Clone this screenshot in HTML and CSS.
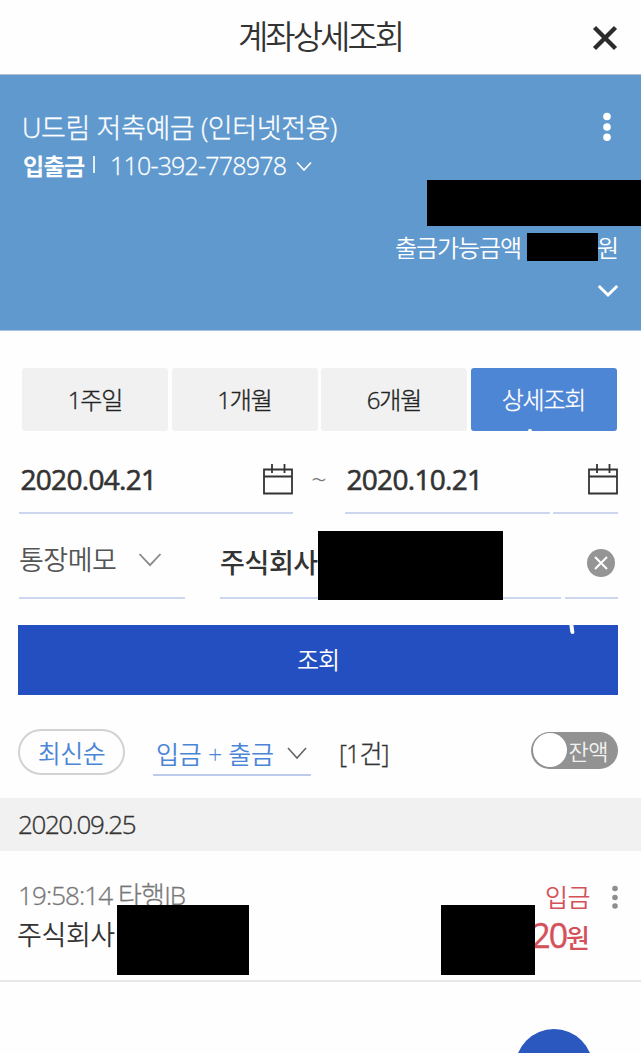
FILE: index.html
```html
<!DOCTYPE html>
<html lang="ko">
<head>
<meta charset="utf-8">
<title>계좌상세조회</title>
<link rel="stylesheet" href="styles.css">
</head>
<body>
<div class="screen">
  <header class="topbar">
    <h1 class="topbar-title">계좌상세조회</h1>
    <svg class="close" width="26" height="26" viewBox="0 0 26 26"><path d="M2.5 2.5 23.5 23.5M23.5 2.5 2.5 23.5"/></svg>
  </header>

  <section class="account">
    <div class="account-head">
      <div class="account-name">U드림 저축예금 (인터넷전용)</div>
      <svg class="more" width="10" height="30" viewBox="0 0 10 30"><circle cx="5" cy="4.5" r="3.8"/><circle cx="5" cy="15" r="3.8"/><circle cx="5" cy="25.2" r="3.8"/></svg>
    </div>
    <div class="account-line">
      <span class="account-type">입출금</span>
      <span class="account-bar"></span>
      <span class="account-number">110-392-778978</span>
      <svg class="chev-number" width="16" height="11" viewBox="0 0 16 11"><path d="M1 1.5 8 9 15 1.5"/></svg>
    </div>
    <div class="balance-mask"></div>
    <div class="available">
      <span class="available-label">출금가능금액</span>
      <span class="available-mask"></span>
      <span class="available-unit">원</span>
    </div>
    <svg class="chev-expand" width="22" height="14" viewBox="0 0 22 14"><path d="M1.8 2 11 11 20.2 2"/></svg>
  </section>

  <nav class="periods">
    <button class="period">1주일</button>
    <button class="period">1개월</button>
    <button class="period">6개월</button>
    <button class="period period-on">상세조회<i class="nick"></i></button>
  </nav>

  <div class="dates">
    <div class="date date-from">
      <span class="date-text">2020.04.21</span>
      <svg class="calendar" width="30" height="31" viewBox="0 0 30 31"><path d="M1 5.5H29V29.5H1ZM1 12.5H29M9 0V9M21.5 0V9"/></svg>
    </div>
    <span class="tilde">~</span>
    <div class="date date-to"><span class="date-text">2020.10.21</span></div>
    <div class="date date-icon">
      <svg class="calendar" width="30" height="31" viewBox="0 0 30 31"><path d="M1 5.5H29V29.5H1ZM1 12.5H29M9 0V9M21.5 0V9"/></svg>
    </div>
  </div>

  <div class="memo">
    <div class="memo-select">
      <span class="memo-label">통장메모</span>
      <svg class="chev-memo" width="24" height="14" viewBox="0 0 24 14"><path d="M1.5 1 12 12.2 22.5 1"/></svg>
    </div>
    <div class="memo-input"><span class="memo-value">주식회사</span><span class="memo-mask"></span></div>
    <div class="memo-clear">
      <svg width="28" height="28" viewBox="0 0 28 28"><circle class="clear-disc" cx="14" cy="14" r="14"/><path class="clear-x" d="M8 8 20 20M20 8 8 20"/></svg>
    </div>
  </div>

  <button class="search">조회<i class="tick"></i></button>

  <div class="filters">
    <span class="sort">최신순</span>
    <span class="kind"><span class="kind-text">입금 + 출금</span><svg width="20" height="13" viewBox="0 0 20 13"><path d="M1 1 10 11 19 1"/></svg></span>
    <span class="count">[1건]</span>
    <span class="toggle"><i class="knob"></i><span class="toggle-text">잔액</span></span>
  </div>

  <div class="day">2020.09.25</div>

  <article class="entry">
    <div class="entry-left">
      <div class="entry-time">19:58:14 타행IB</div>
      <div class="entry-name">주식회사</div>
    </div>
    <div class="entry-right">
      <div class="entry-kind">입금</div>
      <div class="entry-amount">20<span class="won">원</span></div>
    </div>
    <svg class="entry-more" width="8" height="26" viewBox="0 0 8 26"><circle cx="4" cy="3.5" r="2.8"/><circle cx="4" cy="12.5" r="2.8"/><circle cx="4" cy="21" r="2.8"/></svg>
    <span class="mask-name"></span>
    <span class="mask-amount"></span>
  </article>
  <div class="fab"></div>
</div>
</body>
</html>
```
FILE: styles.css
```css
* { box-sizing: border-box; }
body { margin: 0; background: #fefefe; }
button { border: 0; padding: 0; font: inherit; }
svg { display: block; flex: none; fill: none; }

.screen {
  position: relative;
  width: 641px;
  height: 1053px;
  overflow: hidden;
  font-family: "Open Sans", "Noto Sans CJK KR", sans-serif;
  font-weight: 350;
  color: #333;
  white-space: nowrap;
}

.topbar {
  height: 75px;
  padding: 0 23px 0 238px;
  display: flex;
  align-items: center;
  justify-content: space-between;
  border-bottom: 1px solid #b4bfca;
}
.topbar-title { margin: 0; font-size: 33px; font-weight: 350; letter-spacing: -3px; line-height: 78px; }
.close { stroke: #2c2c2c; stroke-width: 4.4; margin-top: 1px; }

.account { height: 256px; background: #5f99ce; color: #fff; padding-top: 36px; border-bottom: 1px solid #a5c6e3; }
.account-head { display: flex; justify-content: space-between; padding: 0 29px 0 22px; height: 34px; }
.account-name { font-size: 27px; font-weight: 300; -webkit-text-stroke: 0.3px; line-height: 34px; letter-spacing: -0.4px; }
.more { fill: #fff; margin-top: 1px; }
.account-line { display: flex; align-items: center; height: 35px; padding: 4px 0 0 23px; }
.account-type { font-size: 23px; font-weight: 700; letter-spacing: -0.6px; width: 70px; }
.account-bar { width: 1.5px; height: 17px; background: #e4eef7; }
.account-number { font-size: 25px; font-weight: 300; -webkit-text-stroke: 0.3px; letter-spacing: -0.8px; margin-left: 15.5px; width: 186px; }
.chev-number { stroke: #fff; stroke-width: 1.7; margin-top: 4px; }
.balance-mask { width: 214px; height: 46px; margin-left: auto; background: #000; }
.available { height: 42px; display: flex; align-items: center; justify-content: flex-end; padding-right: 22px; font-size: 24px; }
.available-label { letter-spacing: -1.1px; width: 132px; margin-top: -2px; }
.available-mask { width: 71px; height: 28px; background: #000; }
.available-unit { width: 21px; letter-spacing: -1px; margin: -2px 1px 0 -1px; }
.chev-expand { margin: 16px 22px 0 auto; stroke: #fff; stroke-width: 3; }

.periods { display: grid; grid-template-columns: repeat(4, 146px); gap: 3.5px; padding: 37px 0 0 22px; }
.period { position: relative; height: 63px; padding-bottom: 2px; border-radius: 3px; background: #f1f1f1; color: #222; font-size: 24px; font-weight: 300; -webkit-text-stroke: 0.35px; letter-spacing: -1.2px; }
.period-on { background: #4e86d6; color: #fff; }
.nick { position: absolute; left: 57px; bottom: -1px; width: 4px; height: 3px; border-radius: 2px; background: #fff; }

.dates { display: flex; height: 83px; padding-left: 19px; }
.date { display: flex; align-items: center; justify-content: space-between; border-bottom: 2px solid #ccd7ef; padding-top: 14px; }
.date-from { width: 274px; }
.date-text { font-size: 28px; font-weight: 400; -webkit-text-stroke: 0.6px; letter-spacing: -0.7px; padding-left: 1.5px; }
.calendar { stroke: #333; stroke-width: 1.8; margin-top: 2px; }
.tilde { width: 52px; text-align: center; font-size: 27px; line-height: 98px; color: #777; }
.date-to { width: 205px; margin-right: 3px; }
.date-icon { width: 65px; justify-content: flex-end; }

.memo { display: flex; height: 85px; padding-left: 19px; }
.memo-select { width: 166px; display: flex; align-items: center; border-bottom: 2px solid #ccd7ef; padding-top: 5px; margin-right: 35px; }
.memo-label { width: 119px; font-size: 27px; letter-spacing: -0.5px; color: #555; }
.chev-memo { stroke: #888; stroke-width: 1.8; margin-top: 4px; }
.memo-input { position: relative; width: 341px; border-bottom: 2px solid #ccd7ef; margin-right: 4px; display: flex; align-items: center; padding-top: 12px; }
.memo-value { font-size: 27px; font-weight: 500; letter-spacing: -0.4px; }
.memo-mask { position: absolute; left: 98px; top: 17px; width: 185px; height: 69px; background: #000; }
.memo-clear { width: 53px; border-bottom: 2px solid #ccd7ef; display: flex; align-items: center; justify-content: flex-end; padding: 14px 3px 0 0; }
.clear-disc { fill: #959595; }
.clear-x { stroke: #fff; stroke-width: 2; }

.search { position: relative; display: block; width: 600px; height: 70px; margin: 26px 0 0 18px; padding-bottom: 4px; background: #244fc0; color: #fff; font-size: 24px; letter-spacing: -1px; }
.tick { position: absolute; left: 552px; top: 0; width: 4px; height: 9px; border-radius: 0 0 2px 2px; background: #fff; transform: skewX(8deg); }

.filters { display: flex; align-items: center; height: 103px; padding: 11px 23px 0 18px; font-size: 25px; }
.sort { width: 107px; height: 46px; border: 2px solid #d2d2d2; border-radius: 23px; color: #4a85d6; display: flex; align-items: center; justify-content: center; letter-spacing: -0.5px; }
.kind { width: 158px; height: 48px; margin-left: 28px; border-bottom: 2px solid #bccbee; color: #4a85d6; display: flex; align-items: center; padding: 4px 0 0 3px; }
.kind-text { width: 131px; letter-spacing: -0.2px; }
.kind svg { stroke: #666; stroke-width: 1.6; margin-top: 1px; }
.count { margin-left: 28px; font-weight: 300; -webkit-text-stroke: 0.35px; letter-spacing: -0.9px; color: #333; }
.toggle { width: 87px; height: 37px; margin: -4px 0 0 auto; border-radius: 19px; background: #929292; display: flex; align-items: center; padding-left: 1.5px; }
.knob { width: 34px; height: 34px; border-radius: 50%; background: #fff; }
.toggle-text { font-size: 22px; letter-spacing: -0.5px; color: #f1f1f1; margin-left: 2px; }

.day { height: 53px; line-height: 52px; padding-left: 18px; background: #f1f1f1; font-size: 26px; font-weight: 300; -webkit-text-stroke: 0.35px; letter-spacing: -1.4px; }

.entry { position: relative; height: 131px; border-bottom: 2px solid #e8e8e8; display: flex; padding-top: 25px; }
.entry-left { padding-left: 18px; }
.entry-time { font-size: 26px; font-weight: 300; -webkit-text-stroke: 0.3px; line-height: 39px; letter-spacing: -0.9px; color: #777; }
.entry-name { font-size: 27px; line-height: 39px; letter-spacing: -0.4px; margin-left: -1px; }
.entry-right { margin-left: auto; text-align: right; color: #d4515a; }
.entry-kind { font-size: 25px; line-height: 42px; letter-spacing: -0.5px; }
.entry-amount { font-size: 34px; font-weight: 500; -webkit-text-stroke: 0.4px; line-height: 34px; letter-spacing: -2px; }
.won { font-size: 26px; letter-spacing: 0; -webkit-text-stroke: 0; }
.entry-more { margin: 9px 22px 0 21px; fill: #8e8e8e; }
.mask-name { position: absolute; left: 117px; top: 54px; width: 132px; height: 70px; background: #000; }
.mask-amount { position: absolute; left: 441px; top: 54px; width: 94px; height: 70px; background: #000; }

.fab { position: absolute; left: 515px; top: 1029px; width: 78px; height: 78px; border-radius: 50%; background: #2b58bf; }
```
